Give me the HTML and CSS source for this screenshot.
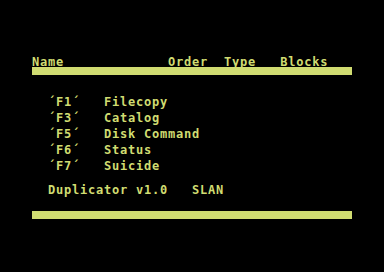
FILE: index.html
```
<!DOCTYPE html>
<html lang="en">
<head>
  <meta charset="UTF-8" />
  <title>Duplicator v1.0</title>
  <link rel="stylesheet" href="styles.css">
</head>
<body>

<div id="screen">
  <div class="row"></div>
  <div class="row"></div>
  <div class="row"></div>
  <div class="row">Name             Order  Type   Blocks</div>
  <div class="row bar"></div>
  <div class="row"></div>
  <div class="row"></div>
  <div class="row"></div>
  <div class="row">  ´F1´   Filecopy</div>
  <div class="row"></div>
  <div class="row">  ´F3´   Catalog</div>
  <div class="row"></div>
  <div class="row">  ´F5´   Disk Command</div>
  <div class="row"></div>
  <div class="row">  ´F6´   Status</div>
  <div class="row"></div>
  <div class="row">  ´F7´   Suicide</div>
  <div class="row"></div>
  <div class="row"></div>
  <div class="row">  Duplicator v1.0   SLAN</div>
  <div class="row"></div>
  <div class="row"></div>
  <div class="row bar"></div>
</div>

</body>
</html>
```

FILE: styles.css
```
body {
  margin: 0;
  background: #000;
  width: 384px;
  height: 272px;
  overflow: hidden;
}
#screen {
  width: 320px;
  height: 200px;
  padding: 35px 32px 37px 32px;
  color: #d0dc71;
  font-family: "DejaVu Sans Mono", "Liberation Mono", monospace;
  font-weight: bold;
  font-size: 12px;
  letter-spacing: 0.78px;
}
.row {
  height: 8px;
  line-height: 6px;
  white-space: pre;
}
.bar {
  background: #d0dc71;
}
```
